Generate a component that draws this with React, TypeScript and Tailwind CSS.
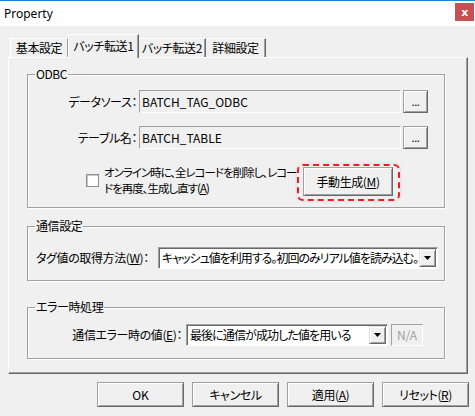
import React from 'react';

const jp = "font-['Noto_Sans_CJK_JP',sans-serif] [font-feature-settings:'palt']";

function Btn({ children, className = '' }: { children: React.ReactNode; className?: string }) {
  return (
    <div
      className={`flex items-center justify-center bg-[#f0f0f0] border border-[#a0a0a0] border-r-[#696969] border-b-[#696969] shadow-[inset_1px_1px_0_#fff,inset_-1px_-1px_0_#a0a0a0] ${className}`}
    >
      {children}
    </div>
  );
}

function DropBtn() {
  return (
    <div className="w-[17px] h-[18px] mr-[1px] shrink-0 flex items-center justify-center bg-[#f0f0f0] border border-[#e3e3e3] border-r-[#696969] border-b-[#696969] shadow-[inset_1px_1px_0_#fff,inset_-1px_-1px_0_#a0a0a0]">
      <svg width="7" height="4" viewBox="0 0 7 4">
        <path d="M0 0h7L3.5 4z" fill="#000" />
      </svg>
    </div>
  );
}

function Group({ title, className = '', children }: { title: string; className?: string; children: React.ReactNode }) {
  return (
    <fieldset className={`border border-[#a0a0a0] shadow-[1px_1px_0_#fff,inset_1px_1px_0_#fff] ${className}`}>
      <legend className="ml-[7px] px-[1px] leading-[16px]">{title}</legend>
      {children}
    </fieldset>
  );
}

const field = 'h-[23px] flex items-center border border-[#a0a0a0] border-r-white border-b-white';
const combo = 'h-[22px] flex items-center justify-between bg-white border border-[#a0a0a0] border-r-white border-b-white shadow-[inset_1px_1px_0_#696969]';

export default function App() {
  return (
    <div className={`w-[475px] h-[416px] bg-[#f0f0f0] text-[12px] tracking-[-0.4px] text-black border-t border-[#1883d7] flex flex-col ${jp}`}>
      {/* title bar */}
      <div className="h-[25px] bg-white flex items-start justify-between">
        <span className="ml-[4px] mt-[5px] leading-[16px] tracking-normal font-['Noto_Sans',sans-serif] text-[12px]">Property</span>
        <div className="w-[19px] h-[18px] mt-[2px] mr-[1px] bg-[#c75050] flex items-center justify-center text-white text-[11px] font-bold font-['DejaVu_Sans',sans-serif] leading-none">
          x
        </div>
      </div>

      {/* tabs */}
      <div className="mt-[8px] h-[23px] flex items-end pl-[10px] relative z-10">
        <div className="w-[58px] h-[19px] flex items-center justify-center border-t border-l border-t-white border-l-white border-r border-r-[#a0a0a0]">
          基本設定
        </div>
        <div className="w-[71px] h-[24px] -mb-[1px] pb-[2px] flex items-center justify-center bg-[#f0f0f0] border-t border-l border-t-white border-l-white border-r border-r-[#696969] shadow-[inset_-1px_0_0_#a0a0a0]">
          バッチ転送1
        </div>
        <div className="w-[67px] h-[19px] flex items-center justify-center border-t border-t-white border-r border-r-[#696969] shadow-[inset_-1px_0_0_#a0a0a0]">
          バッチ転送2
        </div>
        <div className="w-[60px] h-[19px] flex items-center justify-center border-t border-t-white border-r border-r-[#696969] shadow-[inset_-1px_0_0_#a0a0a0]">
          詳細設定
        </div>
      </div>

      {/* panel */}
      <div className="ml-[8px] w-[460px] border border-t-white border-l-white border-r-[#696969] border-b-[#696969] shadow-[inset_-1px_-1px_0_#a0a0a0] pl-[18px] pt-[8px] pb-[14px]">
        <Group title="ODBC" className="w-[418px] pt-[8px] pb-[11px]">
          <div className="flex items-center">
            <span className="w-[109px] text-right">データソース：</span>
            <div className={`ml-[2px] w-[262px] ${field} pl-[2px] tracking-normal`}>BATCH_TAG_ODBC</div>
            <Btn className="ml-[2px] w-[25px] h-[23px] text-[11px]">...</Btn>
          </div>
          <div className="flex items-center mt-[13px]">
            <span className="w-[109px] text-right">テーブル名：</span>
            <div className={`ml-[2px] w-[262px] ${field} pl-[2px] tracking-normal`}>BATCH_TABLE</div>
            <Btn className="ml-[2px] w-[25px] h-[23px] text-[11px]">...</Btn>
          </div>
          <div className="flex items-end mt-[15px] pl-[58px]">
            <div className="self-center mb-[-1px] w-[13px] h-[13px] bg-white border border-[#8e8e8e] shadow-[inset_1px_1px_0_#c8c8c8]" />
            <div className="ml-[5px] w-[196px] h-[32px] leading-[16px] text-[11.5px] overflow-hidden whitespace-nowrap tracking-[-1px]">
              オンライン時に、全レコードを削除し、レコー
              <br />
              ドを再度、生成し直す(<u>A</u>)
            </div>
            <div className="relative ml-[3px]">
              <Btn className="w-[90px] h-[29px]">
                手動生成(<u>M</u>)
              </Btn>
              <div className="absolute left-[-6px] right-[-7px] top-[-3px] bottom-[-5px] rounded-[6px] border-2 border-dashed border-[#ee1c24] shadow-[0_0_3px_rgba(0,0,0,0.15)] pointer-events-none" />
            </div>
          </div>
        </Group>

        <Group title="通信設定" className="w-[418px] mt-[10px] pt-[13px] pb-[11px]">
          <div className="flex items-center pl-[8px]">
            <span className="w-[122px] whitespace-nowrap">
              タグ値の取得方法(<u>W</u>)：
            </span>
            <div className={`w-[280px] ${combo}`}>
              <span className="pl-[3px] whitespace-nowrap overflow-hidden tracking-[-1px]">
                キャッシュ値を利用する。初回のみリアル値を読み込む。
              </span>
              <DropBtn />
            </div>
          </div>
        </Group>

        <Group title="エラー時処理" className="w-[418px] mt-[18px] pt-[9px] pb-[12px]">
          <div className="flex items-center">
            <span className="w-[154px] text-right whitespace-nowrap">
              通信エラー時の値(<u>E</u>)：
            </span>
            <div className={`ml-[4px] w-[202px] ${combo}`}>
              <span className="pl-[3px] whitespace-nowrap tracking-[-0.9px]">最後に通信が成功した値を用いる</span>
              <DropBtn />
            </div>
            <div className="ml-[3px] w-[32px] h-[22px] flex items-center justify-center tracking-normal text-[#a0a0a0] border border-[#a0a0a0] border-r-white border-b-white">
              N/A
            </div>
          </div>
        </Group>
      </div>

      {/* bottom buttons */}
      <div className="mt-[8px] pl-[97px] flex gap-[8px]">
        <Btn className="w-[87px] h-[25px] tracking-normal">OK</Btn>
        <Btn className="w-[87px] h-[25px]">キャンセル</Btn>
        <Btn className="w-[87px] h-[25px]">
          適用(<u>A</u>)
        </Btn>
        <Btn className="w-[87px] h-[25px]">
          リセット(<u>R</u>)
        </Btn>
      </div>
    </div>
  );
}
